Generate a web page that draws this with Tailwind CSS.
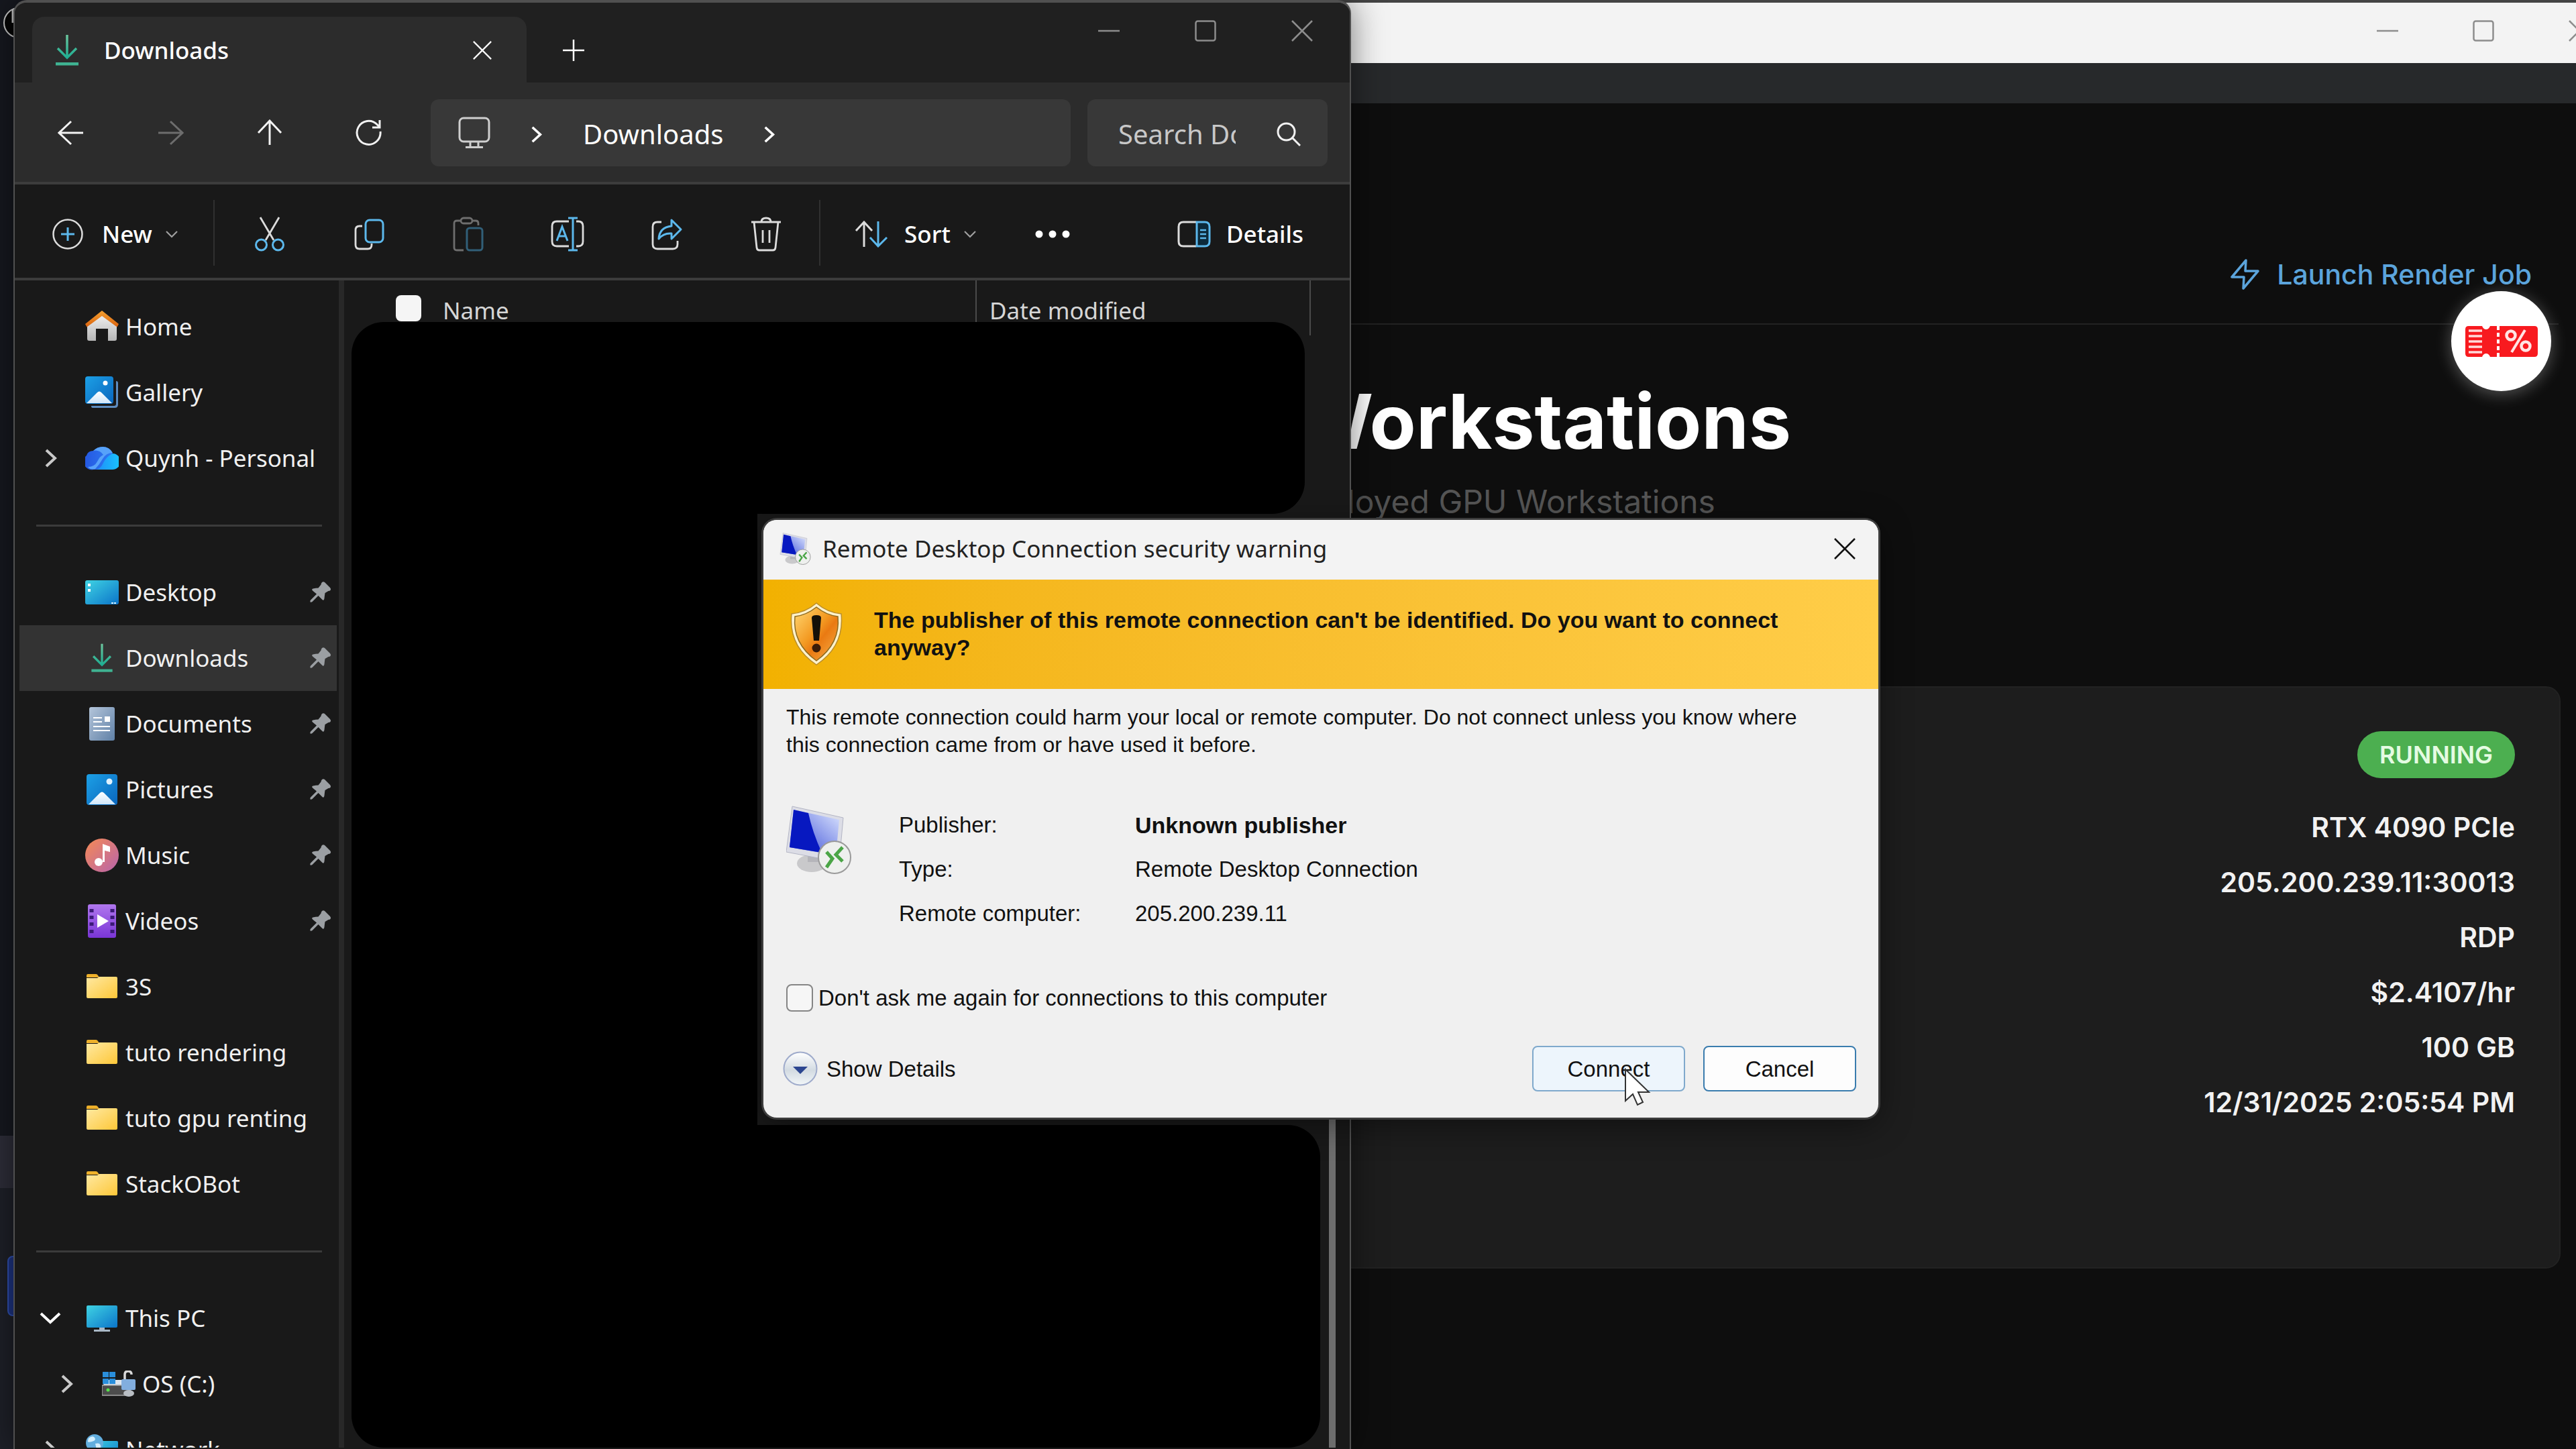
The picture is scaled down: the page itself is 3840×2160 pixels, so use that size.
<!DOCTYPE html>
<html lang="en">
<head>
<meta charset="utf-8">
<title>Workstations</title>
<script src="https://cdn.jsdelivr.net/npm/@tailwindcss/browser@4"></script>
</head>
<body class="bg-[#15171e]">
<!-- Shared icon symbols and gradients -->
<svg class="absolute size-0" aria-hidden="true">
  <defs>
    <linearGradient id="gBlue" x1="0" y1="0" x2="1" y2="1"><stop offset="0" stop-color="#1ca0e6"/><stop offset="1" stop-color="#0a66bd"/></linearGradient>
    <linearGradient id="gTeal" x1="0" y1="0" x2="1" y2="1"><stop offset="0" stop-color="#3fd3e3"/><stop offset="1" stop-color="#0b74c9"/></linearGradient>
    <linearGradient id="gFolder" x1="0" y1="0" x2="1" y2="1"><stop offset="0" stop-color="#ffe9a2"/><stop offset="1" stop-color="#fdc738"/></linearGradient>
    <linearGradient id="gRoof" x1="0" y1="0" x2="0" y2="1"><stop offset="0" stop-color="#f5a130"/><stop offset="1" stop-color="#d9620f"/></linearGradient>
    <linearGradient id="gWall" x1="0" y1="0" x2="0" y2="1"><stop offset="0" stop-color="#f4f4f4"/><stop offset="1" stop-color="#b5b5b5"/></linearGradient>
    <linearGradient id="gDoc" x1="0" y1="0" x2="1" y2="1"><stop offset="0" stop-color="#b4c5da"/><stop offset="1" stop-color="#5f80a6"/></linearGradient>
    <linearGradient id="gMusic" x1="0" y1="0" x2="1" y2="1"><stop offset="0" stop-color="#f58a54"/><stop offset="1" stop-color="#b864ac"/></linearGradient>
    <linearGradient id="gVideo" x1="0" y1="0" x2="0" y2="1"><stop offset="0" stop-color="#b077ee"/><stop offset="1" stop-color="#7a35d6"/></linearGradient>
    <linearGradient id="gSnow" x1="0" y1="0" x2="0" y2="1"><stop offset="0" stop-color="#ffffff"/><stop offset="1" stop-color="#cfe6fa"/></linearGradient>
    <linearGradient id="gCloud" x1="0" y1="0" x2="1" y2="0"><stop offset="0" stop-color="#2457e0"/><stop offset="1" stop-color="#2f7bf5"/></linearGradient>
    <linearGradient id="gCloud2" x1="0" y1="0" x2="1" y2="0"><stop offset="0" stop-color="#1f8df7"/><stop offset="1" stop-color="#19c4ff"/></linearGradient>
    <linearGradient id="gScreen" x1="0" y1="1" x2="1" y2="0"><stop offset="0" stop-color="#2a3ed2"/><stop offset="1" stop-color="#dfe8ff"/></linearGradient>
    <linearGradient id="gShield" x1="0" y1="0" x2="1" y2="1"><stop offset="0" stop-color="#ffd873"/><stop offset=".45" stop-color="#f39a22"/><stop offset=".6" stop-color="#ea7a12"/><stop offset="1" stop-color="#f9b049"/></linearGradient>
    <linearGradient id="gRound" x1="0" y1="0" x2="0" y2="1"><stop offset="0" stop-color="#ffffff"/><stop offset=".55" stop-color="#d3dbe2"/><stop offset="1" stop-color="#f2f6f8"/></linearGradient>
    <linearGradient id="gGreen" x1="0" y1="0" x2="0" y2="1"><stop offset="0" stop-color="#6cc59d"/><stop offset="1" stop-color="#1fae92"/></linearGradient>
    <symbol id="pin" viewBox="0 0 34 34"><path d="M20 2q2-1.500 4 0l8 8q2 2 .5 4q-1 1-3 1l-5 3q-.5 3-1 8q-.5 4-3 2l-6-6l-9 9q-1.500 1-3 .5q-.5-2 .5-3l9-9l-6-5q-2-2 .5-3q4-1 8-1l4-5q0-2 1.500-3.500z" fill="#9b9fa3"/></symbol>
    <symbol id="folder" viewBox="0 0 50 40"><path d="M2 3q0-2 2-2h12q2 0 3 2l2 3H2z" fill="#eeb02a"/><path d="M2 7h16l3-2h25q2 0 2 2v28q0 2-2 2H4q-2 0-2-2z" fill="url(#gFolder)"/></symbol>
    <symbol id="down" viewBox="0 0 36 50"><path d="M18 2v33M4 22l14 14l14-14" fill="none" stroke="url(#gGreen)" stroke-width="3.500"/><rect x="1" y="43" width="34" height="4.500" fill="#3fb392"/></symbol>
    <symbol id="close" viewBox="0 0 32 32"><path d="M1 1l30 30M31 1L1 31" fill="none" stroke="currentColor" stroke-width="2.500"/></symbol>
    <symbol id="right" viewBox="0 0 20 30"><path d="M3 3l13 12L3 27" fill="none" stroke="currentColor" stroke-width="4"/></symbol>
    <symbol id="chev" viewBox="0 0 18 12"><path d="M1 2l8 8l8-8" fill="none" stroke="#a0a0a0" stroke-width="2.200"/></symbol>
    <symbol id="rdp" viewBox="0 0 98 102"><ellipse cx="38" cy="86" rx="22" ry="13" fill="#c9c9cb"/><path d="M32 60h20v24H32z" fill="#b5b5ba"/><path d="M9 1l76 17l-6 66L0 69z" fill="#dcdde6" stroke="#b3b5c4"/><path d="M11 6l68 15l-5 53L5 62z" fill="url(#gScreen)"/><path d="M11 6l22 5q6 28 20 59L5 62z" fill="#0718c0"/><circle cx="72" cy="77" r="24" fill="#eef0ee" stroke="#9a9a9a" stroke-width="2"/><path d="M60 69l9 10l-9 13M84 62l-10 11l10 10" fill="none" stroke="#4aa546" stroke-width="5"/></symbol>
  </defs>
</svg>

<div class="relative min-h-screen overflow-hidden bg-[#15171e] text-white">

  <!-- Sliver of the window that lies behind, at the left edge -->
  <div class="absolute inset-y-0 left-0 w-6 overflow-hidden bg-[#16181f]">
    <svg class="absolute left-1 top-2.5 h-12 w-10" viewBox="0 0 40 48"><circle cx="24" cy="24" r="22" fill="#050505" stroke="#c8c8c8" stroke-width="2"/><path d="M15 4v20" stroke="#c8c8c8" stroke-width="3"/></svg>
    <div class="mt-[1693px] h-[78px] bg-[#2d2d38]"></div>
    <div class="h-full bg-[#1e2028] pl-[11px] pt-[101px]"><div class="h-[90px] w-10 rounded-lg border-2 border-[#2f4fae] bg-[#1d3380]"></div></div>
  </div>

  <!-- Browser window -->
  <section class="relative ml-[1200px] min-h-screen overflow-hidden border-t-4 border-[#444] bg-[#0e0e0e] pb-[268px] font-[Inter,sans-serif]">
    <div class="flex h-[90px] items-start justify-end gap-[111px] bg-[#f3f3f3] pt-[26px] text-[#8d8d8d]">
      <button aria-label="Minimize" class="h-8 w-8"><svg viewBox="0 0 32 32"><path d="M0 16h32" stroke="currentColor" stroke-width="2.500"/></svg></button>
      <button aria-label="Maximize" class="h-8 w-8"><svg viewBox="0 0 32 32"><rect x="1.500" y="1.500" width="29" height="29" rx="3" fill="none" stroke="currentColor" stroke-width="2.500"/></svg></button>
      <button aria-label="Close" class="-mr-[21px] h-8 w-8"><svg class="size-8"><use href="#close"/></svg></button>
    </div>
    <div class="h-[60px] bg-[#27292b]"></div>
    <div class="mr-[26px] flex h-[330px] items-start justify-end border-b-2 border-[#222] pr-10 pt-[230px]">
      <a href="#" class="flex items-center gap-[26px] text-[41px] font-medium leading-[50px] text-[#5ba4dc]">
        <svg class="h-[46px] w-[43px]" viewBox="0 0 43 46"><path d="M23 2L2 27h18l-1 17L41 18H22z" fill="none" stroke="currentColor" stroke-width="3.500" stroke-linejoin="round"/></svg>
        Launch Render Job
      </a>
    </div>
    <div class="pl-[730px]">
      <h1 class="pt-[84px] text-[113px] font-bold leading-[120px]">Workstations</h1>
      <p class="-ml-[14px] pt-[30px] text-[48px] leading-[60px] text-[#555]">Deployed GPU Workstations</p>
    </div>
    <div class="mr-[23px] mt-[245px] flex flex-col items-end rounded-[22px] border-2 border-[#222] bg-[#1d1d1d] pb-[205px] pr-[66px] pt-[65px]">
      <span class="rounded-full bg-[#4caf50] px-[33px] text-[36px] font-semibold leading-[70px] text-[#e4fbe2]">RUNNING</span>
      <ul class="pt-8 text-right text-[41px] font-semibold leading-[82px] text-[#f2f2f2]">
        <li>RTX 4090 PCIe</li>
        <li>205.200.239.11:30013</li>
        <li>RDP</li>
        <li>$2.4107/hr</li>
        <li>100 GB</li>
        <li>12/31/2025 2:05:54 PM</li>
      </ul>
    </div>
    <button aria-label="Coupons" class="absolute right-[37px] top-[430px] flex size-[149px] items-center justify-center rounded-full bg-white shadow-[0_4px_24px_rgba(255,255,255,0.3)]">
      <svg class="h-[50px] w-[110px]" viewBox="0 0 110 50"><path d="M6 2h20q2 5 6 5t6-5h66q5 0 5 5v36q0 5-5 5H38q-2-5-6-5t-6 5H6q-5 0-5-5V7q0-5 5-5z" fill="#f81a1f"/><path d="M6 9h20M6 17h20M6 25h20M6 33h20M6 41h20" stroke="#ffd9d9" stroke-width="3.500"/><path d="M50 2v46" stroke="#fff" stroke-width="4" stroke-dasharray="6 4"/><circle cx="69" cy="16" r="6.500" fill="none" stroke="#ffe4e4" stroke-width="4.500"/><circle cx="91" cy="32" r="6.500" fill="none" stroke="#ffe4e4" stroke-width="4.500"/><path d="M90 8L70 41" stroke="#ffe4e4" stroke-width="4"/></svg>
    </button>
  </section>

  <!-- File Explorer window -->
  <section class="absolute bottom-0 left-5 top-0 flex w-[1994px] flex-col overflow-hidden rounded-t-[20px] border-x-2 border-t-4 border-[#505050] bg-[#191919] font-['Noto_Sans',sans-serif] text-[35px] leading-[48px] shadow-[0_0_50px_rgba(0,0,0,0.5)]">
    <div class="flex h-[119px] flex-none items-end bg-[#202020] pl-[26px]">
      <div class="flex h-[98px] w-[737px] items-center rounded-t-[18px] bg-[#2c2c2c] pl-[34px] pr-[52px] pt-0.5">
        <svg class="h-[50px] w-9"><use href="#down"/></svg>
        <span class="pl-[37px] font-medium">Downloads</span>
        <button aria-label="Close tab" class="ml-auto"><svg class="size-7"><use href="#close"/></svg></button>
      </div>
      <button aria-label="New tab" class="mb-8 ml-[54px]"><svg class="size-8" viewBox="0 0 32 32"><path d="M16 0v32M0 16h32" stroke="#fff" stroke-width="2.500"/></svg></button>
      <div class="mb-[61px] ml-auto flex gap-[112px] pr-[55px] text-[#8c8c8c]">
        <button aria-label="Minimize"><svg class="size-8" viewBox="0 0 32 32"><path d="M0 16h32" stroke="currentColor" stroke-width="2.500"/></svg></button>
        <button aria-label="Maximize"><svg class="size-8" viewBox="0 0 32 32"><rect x="1.500" y="1.500" width="29" height="29" rx="3" fill="none" stroke="currentColor" stroke-width="2.500"/></svg></button>
        <button aria-label="Close"><svg class="size-8"><use href="#close"/></svg></button>
      </div>
    </div>

    <div class="flex h-[152px] flex-none items-center border-b-4 border-[#3c3c3c] bg-[#2c2c2c] pl-2.5 pr-[33px] pt-0.5 text-[40px]">
      <button aria-label="Back" class="flex w-[148px] justify-center"><svg class="size-10" viewBox="0 0 40 40"><path d="M2 20h36M20 3L2 20l18 17" fill="none" stroke="#f2f2f2" stroke-width="3"/></svg></button>
      <button aria-label="Forward" class="flex w-[148px] justify-center"><svg class="size-10" viewBox="0 0 40 40"><path d="M2 20h36M20 3l18 17l-18 17" fill="none" stroke="#6d6d6d" stroke-width="3"/></svg></button>
      <button aria-label="Up" class="flex w-[148px] justify-center"><svg class="size-10" viewBox="0 0 40 40"><path d="M20 38V2M3 20L20 2l17 18" fill="none" stroke="#f2f2f2" stroke-width="3"/></svg></button>
      <button aria-label="Refresh" class="flex w-[148px] justify-center"><svg class="size-10" viewBox="0 0 40 40"><path d="M37 18a17.500 17.500 0 1 1-5-10.500l4 4M36 1v11H25" fill="none" stroke="#f2f2f2" stroke-width="3"/></svg></button>
      <div class="ml-[18px] flex h-[100px] flex-1 items-center gap-[60px] rounded-xl bg-[#383838] pl-[41px] pt-1">
        <svg class="mb-1 h-[50px] w-12" viewBox="0 0 48 50"><rect x="2" y="3" width="44" height="35" rx="6" fill="none" stroke="#cfcfcf" stroke-width="3"/><path d="M18 38v8M30 38v8M11 46.500h26" stroke="#cfcfcf" stroke-width="3"/></svg>
        <svg class="h-[27px] w-[18px]"><use href="#right"/></svg>
        <span>Downloads</span>
        <svg class="h-[27px] w-[18px]"><use href="#right"/></svg>
      </div>
      <div class="ml-[25px] flex h-[100px] w-[358px] items-center rounded-xl bg-[#383838] pl-[46px] pt-1">
        <input type="text" aria-label="Search Downloads" placeholder="Search Downloads" class="w-[175px] bg-transparent outline-none placeholder:text-[#c8c8c8]">
        <svg class="ml-[61px] size-9" viewBox="0 0 36 36"><circle cx="14.500" cy="14.500" r="12.500" fill="none" stroke="#f2f2f2" stroke-width="3"/><path d="M23 23l12 12" stroke="#f2f2f2" stroke-width="3"/></svg>
      </div>
    </div>

    <div class="flex h-[143px] flex-none items-center border-b-4 border-[#3c3c3c] bg-[#191919] pl-14 pr-[69px] pt-2">
      <button class="flex w-[187px] items-center">
        <svg class="size-[46px]" viewBox="0 0 46 46"><circle cx="23" cy="23" r="21.500" fill="none" stroke="#dcdcdc" stroke-width="2.500"/><path d="M23 13v20M13 23h20" stroke="#5cb8ec" stroke-width="3"/></svg>
        <span class="pl-7 font-medium">New</span>
        <svg class="ml-auto h-3 w-[18px]"><use href="#chev"/></svg>
      </button>
      <div class="-mt-1 ml-[53px] mr-[8px] h-[98px] w-0.5 bg-[#303030]"></div>
      <button aria-label="Cut" class="flex w-[148px] justify-center"><svg class="h-[52px] w-12" viewBox="0 0 48 52"><path d="M10 1l20 34M38 1L18 35" stroke="#dcdcdc" stroke-width="2.800"/><circle cx="11.500" cy="42" r="8" fill="none" stroke="#5cb8ec" stroke-width="3"/><circle cx="36.500" cy="42" r="8" fill="none" stroke="#5cb8ec" stroke-width="3"/></svg></button>
      <button aria-label="Copy" class="flex w-[148px] justify-center"><svg class="h-[48px] w-[46px]" viewBox="0 0 46 48"><path d="M13 12H9q-6 0-6 6v22q0 6 6 6h12q6 0 6-6v-2" fill="none" stroke="#dcdcdc" stroke-width="2.800"/><rect x="18" y="3" width="26" height="33" rx="6" fill="none" stroke="#5cb8ec" stroke-width="3"/></svg></button>
      <button aria-label="Paste" disabled class="flex w-[148px] justify-center"><svg class="h-[52px] w-[46px]" viewBox="0 0 46 52"><path d="M12 6H6q-4 0-4 4v36q0 4 4 4h10M28 6h6q4 0 4 4v3" fill="none" stroke="#6e6e6e" stroke-width="2.800"/><rect x="12" y="2" width="17" height="8" rx="4" fill="none" stroke="#6e6e6e" stroke-width="2.800"/><rect x="21" y="17" width="23" height="33" rx="4" fill="none" stroke="#315f78" stroke-width="3"/></svg></button>
      <button aria-label="Rename" class="flex w-[148px] justify-center"><svg class="h-[52px] w-[50px]" viewBox="0 0 50 52"><path d="M27 7H9q-7 0-7 7v23q0 7 7 7h18M38 7h3q7 0 7 7v23q0 7-7 7h-3" fill="none" stroke="#dcdcdc" stroke-width="2.800"/><path d="M33 2v48M26 2h14M26 50h14" stroke="#5cb8ec" stroke-width="3"/><path d="M9 36l8-21l8 21M12 29h10" fill="none" stroke="#5cb8ec" stroke-width="3"/></svg></button>
      <button aria-label="Share" class="flex w-[148px] justify-center"><svg class="h-[48px] w-[48px]" viewBox="0 0 48 48"><path d="M16 6h-6q-7 0-7 7v26q0 7 7 7h23q7 0 7-7v-5" fill="none" stroke="#dcdcdc" stroke-width="2.800"/><path d="M31 3l14 14l-14 14v-8q-12-1-19 8q1-17 19-19z" fill="none" stroke="#5cb8ec" stroke-width="3" stroke-linejoin="round"/></svg></button>
      <button aria-label="Delete" class="flex w-[148px] justify-center"><svg class="h-[52px] w-[46px]" viewBox="0 0 46 52"><path d="M1 8h44M5 8l4 38q.5 4 4 4h20q3.500 0 4-4l4-38M16 8q0-6 7-6t7 6M18 20v19M28 20v19" fill="none" stroke="#dcdcdc" stroke-width="2.800"/></svg></button>
      <div class="-mt-1 ml-[5px] h-[98px] w-0.5 bg-[#303030]"></div>
      <button class="ml-[51px] flex w-[181px] items-center">
        <svg class="h-10 w-[50px]" viewBox="0 0 50 40"><path d="M14 39V2M2 15L14 2l12 13" fill="none" stroke="#dcdcdc" stroke-width="3"/><path d="M35 1v37M23 25l12 13l13-13" fill="none" stroke="#5cb8ec" stroke-width="3"/></svg>
        <span class="pl-6 font-medium">Sort</span>
        <svg class="ml-auto h-3 w-[18px]"><use href="#chev"/></svg>
      </button>
      <button aria-label="More" class="ml-[88px]"><svg class="h-3 w-[52px]" viewBox="0 0 52 12"><circle cx="6" cy="6" r="5.500" fill="#fff"/><circle cx="26" cy="6" r="5.500" fill="#fff"/><circle cx="46" cy="6" r="5.500" fill="#fff"/></svg></button>
      <button class="ml-auto flex items-center gap-[23px]">
        <svg class="h-10 w-[50px]" viewBox="0 0 50 40"><path d="M28 2H9Q2 2 2 9v22q0 7 7 7h19" fill="none" stroke="#dcdcdc" stroke-width="3"/><path d="M29 2h12q7 0 7 7v22q0 7-7 7H29z" fill="#0c2a3b" stroke="#5cb8ec" stroke-width="3"/><path d="M34 14h9M34 20h9M34 26h9" stroke="#5cb8ec" stroke-width="2.500"/></svg>
        <span class="font-medium">Details</span>
      </button>
    </div>

    <div class="flex min-h-0 flex-1">
      <nav class="h-[1740px] w-[491px] flex-none overflow-hidden border-r-8 border-[#282828] pt-5 text-[#f0f0f0]">
        <ul>
          <li><a href="#" class="flex h-[98px] items-center pl-[105px]"><svg class="size-[50px]" viewBox="0 0 50 50"><path d="M3 20L25 4l22 16v23q0 3-3 3H34V28H16v18H6q-3 0-3-3z" fill="url(#gWall)"/><path d="M25 1L0 21l2.500 4.500L25 9l22.500 16.500L50 21z" fill="url(#gRoof)"/></svg><span class="pl-2.5">Home</span></a></li>
          <li><a href="#" class="flex h-[98px] items-center pl-[105px]"><svg class="size-[50px]" viewBox="0 0 50 50"><path d="M46 8q3 0 3 3v32q0 5-5 5H11q-2 0-2-3h34q3 0 3-3z" fill="#5d8cc0"/><rect x="0" y="1" width="42" height="41" rx="4" fill="url(#gBlue)"/><circle cx="30" cy="11" r="3.500" fill="#fff"/><path d="M2 41l16-16q3-3 6 0l16 16z" fill="url(#gSnow)"/></svg><span class="pl-2.5">Gallery</span></a></li>
          <li><a href="#" class="flex h-[98px] items-center pl-[44px]"><svg class="h-[30px] w-5 text-[#c9c9c9]"><use href="#right"/></svg><svg class="ml-[41px] h-9 w-[50px]" viewBox="0 0 50 36"><path d="M12 35A12 12 0 0 1 2 14Q4 7 12 7q6-6 14-6q10 0 15 10L26 35z" fill="url(#gCloud)"/><path d="M12 7q6-6 14-6q10 0 15 9q-10 0-15 9t-11 15Q8 36 4 31q10 0 14-8t9-10Q21 5 12 7z" fill="#57a2fa"/><path d="M16 35q7-1 11-10t14-14a12 12 0 0 1-1 24z" fill="url(#gCloud2)"/></svg><span class="pl-2.5">Quynh - Personal</span></a></li>
        </ul>
        <div class="flex h-[102px] items-center pl-8 pr-[25px]"><hr class="h-[3px] w-full border-0 bg-[#3b3b3b]"></div>
        <ul>
          <li><a href="#" class="flex h-[98px] items-center pl-[105px] pr-[11px]"><svg class="h-10 w-[50px]" viewBox="0 0 50 40"><rect y="2" width="50" height="36" rx="3" fill="url(#gTeal)"/><path d="M4 7h4v4H4zM4 15h4v4H4z" fill="#fff"/><path d="M39 36h7" stroke="#d7f0ff" stroke-width="2" stroke-dasharray="3 1"/></svg><span class="pl-2.5">Desktop</span><svg class="ml-auto size-[34px]"><use href="#pin"/></svg></a></li>
          <li><a href="#" aria-current="page" class="ml-[7px] mr-[3px] flex h-[98px] items-center bg-[#333] pl-[105px] pr-2"><svg class="h-[46px] w-9"><use href="#down"/></svg><span class="pl-[17px]">Downloads</span><svg class="ml-auto size-[34px]"><use href="#pin"/></svg></a></li>
          <li><a href="#" class="flex h-[98px] items-center pl-[105px] pr-[11px]"><svg class="size-[50px]" viewBox="0 0 50 50"><rect x="6" width="38" height="50" rx="3" fill="url(#gDoc)"/><path d="M12 16h13M12 22h13M12 29h25M12 35h25" stroke="#fff" stroke-width="2"/><rect x="29" y="14" width="8" height="8" fill="#fff"/></svg><span class="pl-2.5">Documents</span><svg class="ml-auto size-[34px]"><use href="#pin"/></svg></a></li>
          <li><a href="#" class="flex h-[98px] items-center pl-[105px] pr-[11px]"><svg class="size-[50px]" viewBox="0 0 50 50"><rect x="2" y="2" width="46" height="46" rx="4" fill="url(#gBlue)"/><circle cx="36" cy="13" r="4.500" fill="#dff2ff"/><path d="M5 47l17-17q3-3 6 0l17 17z" fill="url(#gSnow)"/></svg><span class="pl-2.5">Pictures</span><svg class="ml-auto size-[34px]"><use href="#pin"/></svg></a></li>
          <li><a href="#" class="flex h-[98px] items-center pl-[105px] pr-[11px]"><svg class="size-[50px]" viewBox="0 0 50 50"><circle cx="25" cy="25" r="25" fill="url(#gMusic)"/><circle cx="20" cy="35" r="6" fill="#fff"/><path d="M26 35V8l11 4v8l-8-2v17z" fill="#fff"/></svg><span class="pl-2.5">Music</span><svg class="ml-auto size-[34px]"><use href="#pin"/></svg></a></li>
          <li><a href="#" class="flex h-[98px] items-center pl-[105px] pr-[11px]"><svg class="size-[50px]" viewBox="0 0 50 50"><rect x="4" width="42" height="50" rx="3" fill="url(#gVideo)"/><path d="M6.500 7h6v5h-6zM6.500 17h6v5h-6zM6.500 27h6v5h-6zM6.500 38h6v5h-6zM37.500 7h6v5h-6zM37.500 17h6v5h-6zM37.500 27h6v5h-6zM37.500 38h6v5h-6z" fill="#3c1a78"/><path d="M18 15l17 10l-17 10z" fill="#fff"/></svg><span class="pl-2.5">Videos</span><svg class="ml-auto size-[34px]"><use href="#pin"/></svg></a></li>
          <li><a href="#" class="flex h-[98px] items-center pl-[105px]"><svg class="h-10 w-[50px]"><use href="#folder"/></svg><span class="pl-2.5">3S</span></a></li>
          <li><a href="#" class="flex h-[98px] items-center pl-[105px]"><svg class="h-10 w-[50px]"><use href="#folder"/></svg><span class="pl-2.5">tuto rendering</span></a></li>
          <li><a href="#" class="flex h-[98px] items-center pl-[105px]"><svg class="h-10 w-[50px]"><use href="#folder"/></svg><span class="pl-2.5">tuto gpu renting</span></a></li>
          <li><a href="#" class="flex h-[98px] items-center pl-[105px]"><svg class="h-10 w-[50px]"><use href="#folder"/></svg><span class="pl-2.5">StackOBot</span></a></li>
        </ul>
        <div class="flex h-[102px] items-center pl-8 pr-[25px]"><hr class="h-[3px] w-full border-0 bg-[#3b3b3b]"></div>
        <ul>
          <li><a href="#" class="flex h-[98px] items-center pl-[37px]"><svg class="h-5 w-8" viewBox="0 0 32 20"><path d="M2 3l14 13L30 3" fill="none" stroke="#fff" stroke-width="4"/></svg><svg class="ml-[36px] h-10 w-[50px]" viewBox="0 0 50 40"><rect x="2" y="1" width="46" height="33" rx="2" fill="url(#gTeal)"/><path d="M21 34h8v3h8v3H13v-3h8z" fill="#a9b8c6"/></svg><span class="pl-2.5">This PC</span></a></li>
          <li><a href="#" class="flex h-[98px] items-center pl-[68px]"><svg class="h-[30px] w-5 text-[#c9c9c9]"><use href="#right"/></svg><svg class="ml-[42px] h-10 w-[50px]" viewBox="0 0 50 40"><path d="M1 23l5-9h32l8 9z" fill="#dde6ee"/><path d="M1 2h9v8H1zM11 2h9v8h-9zM1 12h9v8H1zM11 12h9v8h-9z" fill="#2a8fdc"/><rect y="22" width="42" height="15" rx="1" fill="#4c4c4c" stroke="#a7a7a7" stroke-width="1.500"/><circle cx="9" cy="29" r="2.500" fill="#55e04a"/><path d="M34 14V6q0-5 5-5t5 5" fill="none" stroke="#d8d8d8" stroke-width="3.500"/><rect x="29" y="13" width="21" height="16" rx="2" fill="#82aede"/><ellipse cx="40" cy="34" rx="8" ry="5" fill="#b9bec4"/></svg><span class="pl-2.5">OS (C:)</span></a></li>
          <li><a href="#" class="flex h-[98px] items-center pl-[44px]"><svg class="h-[30px] w-5 text-[#c9c9c9]"><use href="#right"/></svg><svg class="ml-[41px] size-[50px]" viewBox="0 0 50 50"><rect x="8" y="12" width="41" height="30" rx="2" fill="url(#gTeal)"/><path d="M24 42h8v3h7v3H17v-3h7z" fill="#a9b8c6"/><circle cx="14" cy="15" r="13" fill="#62aede"/><path d="M5 8q6-5 9-1t-4 6t-6-1zM15 16q7-2 8 3t-6 6z" fill="#d3eefc"/></svg><span class="pl-2.5">Network</span></a></li>
        </ul>
      </nav>

      <div class="min-w-0 flex-1">
        <div class="flex h-[82px] items-start text-[#d6d6d6]">
          <div class="flex h-full w-[943px] items-start border-r-2 border-[#4a4a4a] pl-[77px]">
            <label class="flex items-start gap-8"><input type="checkbox" class="mt-[22px] h-[39px] w-[38px] appearance-none rounded-lg bg-[#f5f5f5]"><span class="pt-[21px]">Name</span></label>
          </div>
          <div class="h-full w-[498px] border-r-2 border-[#4a4a4a] pl-[19px] pt-[21px]">Date modified</div>
        </div>
        <div class="-mt-5 ml-[11px] flex">
          <!-- Redacted file list -->
          <div class="w-[1444px] flex-none">
            <div class="relative h-[286px] w-[1421px] rounded-r-[48px] rounded-tl-[48px] bg-black"></div>
            <div class="h-[911px] w-[605px] bg-black"></div>
            <div class="h-[481px] rounded-b-[48px] rounded-tr-[48px] bg-black"></div>
          </div>
          <div class="ml-[13px] mt-[800px] w-2.5 bg-[#6d6d6d]"></div>
        </div>
      </div>
    </div>
  </section>

  <!-- Security warning dialog -->
  <section role="dialog" aria-labelledby="dlg" class="absolute left-[1138px] top-[775px] w-[1662px] overflow-hidden rounded-[20px] bg-[#f0f0f0] font-['Liberation_Sans',sans-serif] text-[33px] leading-[41px] text-[#111] shadow-[0_0_0_3px_#3c3c3c,0_10px_50px_rgba(0,0,0,0.45)]">
    <div class="flex h-[89px] items-center bg-[#f3f3f3] pb-1 pl-6 pr-[34px]">
      <svg class="size-12"><use href="#rdp"/></svg>
      <h2 id="dlg" class="pl-4 font-['Noto_Sans',sans-serif] text-[35px] leading-[48px] text-[#222]">Remote Desktop Connection security warning</h2>
      <button aria-label="Close" class="ml-auto"><svg class="size-8"><use href="#close"/></svg></button>
    </div>
    <div class="flex h-[163px] items-start bg-gradient-to-r from-[#f2b100] to-[#ffcd48] pl-[39px] pt-[33px]">
      <svg class="h-[96px] w-[80px] flex-none" viewBox="0 0 80 96"><path d="M40 2Q56 16 77 18Q82 66 40 94Q-2 66 3 18Q24 16 40 2z" fill="#fff2cc" stroke="#b98d2b" stroke-width="1.500"/><path d="M40 8Q55 20 72 22Q76 62 40 88Q4 62 8 22Q25 20 40 8z" fill="url(#gShield)" stroke="#8c6a20" stroke-width="1.500"/><path d="M33 24q0-4 7-4t7 4l-3 34h-8z" fill="#141008"/><circle cx="40" cy="69" r="6.500" fill="#3a1c08"/></svg>
      <p class="w-[1400px] pl-[46px] pt-[7px] text-[34px] font-bold">The publisher of this remote connection can't be identified. Do you want to connect<br>anyway?</p>
    </div>
    <div class="pb-[39px] pl-[34px] pr-[33px] pt-[22px]">
      <p class="text-[32px]">This remote connection could harm your local or remote computer. Do not connect unless you know where<br>this connection came from or have used it before.</p>
      <div class="mt-[66px] flex items-start">
        <svg class="mt-1 h-[102px] w-[98px]"><use href="#rdp"/></svg>
        <dl class="ml-[70px] grid grid-cols-[352px_auto] leading-[66px]">
          <dt>Publisher:</dt><dd class="text-[34px] font-bold">Unknown publisher</dd>
          <dt>Type:</dt><dd>Remote Desktop Connection</dd>
          <dt>Remote computer:</dt><dd>205.200.239.11</dd>
        </dl>
      </div>
      <label class="mt-[72px] flex items-center gap-2"><input type="checkbox" class="h-[41px] w-10 appearance-none rounded-lg border-2 border-[#858585] bg-[#f6f6f6]">Don't ask me again for connections to this computer</label>
      <div class="mt-[51px] flex h-[68px] items-center">
        <button class="-ml-[5px] flex items-center gap-[13px]"><svg class="size-[52px]" viewBox="0 0 52 52"><circle cx="26" cy="26" r="24.500" fill="url(#gRound)" stroke="#9fabcb" stroke-width="2"/><path d="M15 23h22L26 34z" fill="#2c4690"/></svg>Show Details</button>
        <button class="ml-auto h-[68px] w-[228px] rounded-lg border-2 border-[#7fa9cc] bg-[#edf5fc]">Connect</button>
        <button class="ml-[27px] h-[68px] w-[228px] rounded-lg border-2 border-[#3a7cae] bg-[#fdfdfd]">Cancel</button>
      </div>
    </div>
  </section>

  <!-- Mouse pointer -->
  <svg class="pointer-events-none absolute left-[2421px] top-[1592px] h-[58px] w-10" viewBox="0 0 40 58"><path d="M2 2v47l11-10l7 16l8-4l-7-15h16z" fill="#fff" stroke="#333" stroke-width="2"/></svg>
</div>
</body>
</html>
